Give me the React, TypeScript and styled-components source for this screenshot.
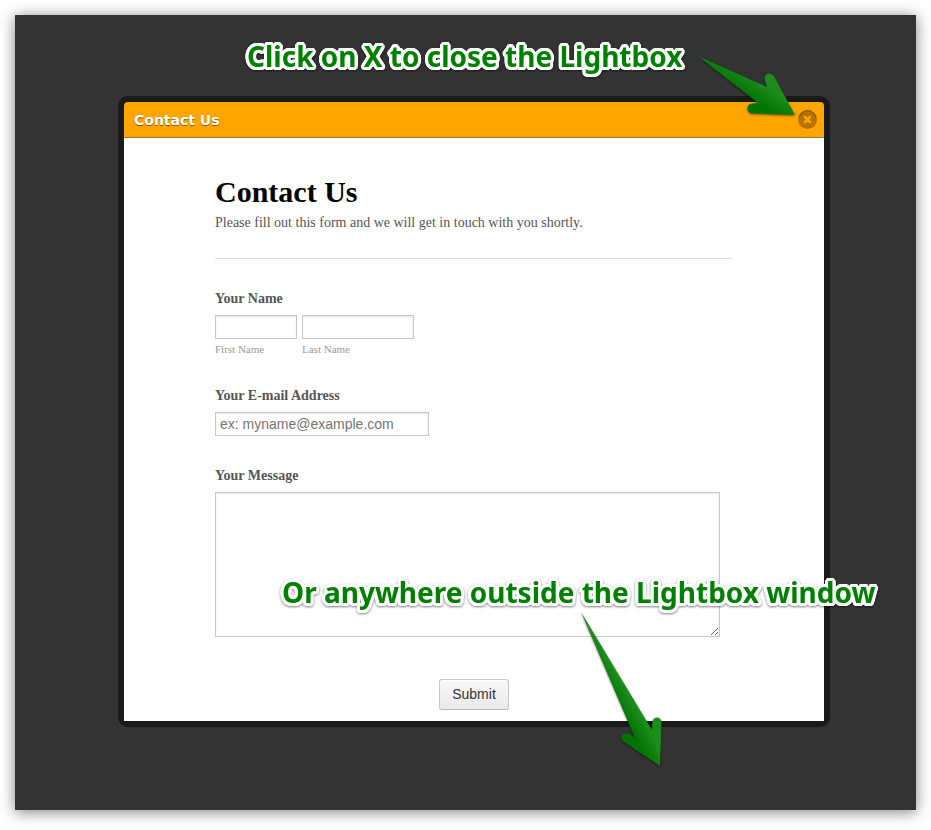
import React from "react";
import styled, { createGlobalStyle } from "styled-components";

const GlobalStyle = createGlobalStyle`
  *, *::before, *::after { box-sizing: border-box; }
  body {
    margin: 0;
    background: #fff;
    font-family: "Liberation Serif", "Times New Roman", serif;
  }
`;

const Page = styled.div`
  display: flex;
  min-height: 100vh;
  padding: 15px 15px 20px;
`;

const Backdrop = styled.main`
  flex: 1;
  min-width: 0;
  padding: 81px 0 83px 17px;
  background: #333;
  box-shadow: 0 2px 14px rgba(0, 0, 0, 0.5);
`;

const Dialog = styled.section`
  position: relative;
  width: 100%;
  max-width: 712px;
  margin: 0 auto;
  border: 6px solid #1a1a1a;
  border-radius: 10px;
  background: #1a1a1a;
`;

const TitleBar = styled.header`
  display: flex;
  align-items: center;
  justify-content: space-between;
  height: 36px;
  padding: 0 7px 0 10px;
  border-bottom: 1px solid #997a45;
  border-radius: 4px 4px 0 0;
  background: #ffa500;
`;

const BarTitle = styled.h2`
  margin: 0;
  color: #fff;
  font: bold 14px/20px Verdana, "DejaVu Sans", sans-serif;
  text-shadow: 0 1px 1px rgba(0, 0, 0, 0.5);
`;

const CloseButton = styled.button`
  display: flex;
  width: 19px;
  height: 19px;
  padding: 0;
  border: 0;
  background: none;
  cursor: pointer;
`;

const Body = styled.div`
  padding: 36px 20px 11px;
  background: #fff;
`;

const Form = styled.form`
  max-width: 518px;
  margin: 0 auto;
`;

const Heading = styled.h1`
  margin: 0;
  color: #000;
  font-size: 30px;
  line-height: 36px;
`;

const Intro = styled.p`
  margin: 0;
  color: #555;
  font-size: 14px;
  line-height: 26px;
`;

const FormHeader = styled.div`
  padding-bottom: 22px;
  margin-bottom: 30px;
  border-bottom: 1px solid #e0e0e0;
`;

const Field = styled.fieldset<{ $gap: number }>`
  min-width: 0;
  margin: 0 0 ${(p) => p.$gap}px;
  padding: 0;
  border: 0;
`;

const Caption = styled.label`
  display: block;
  margin-bottom: 7px;
  color: #555;
  font-size: 14px;
  font-weight: bold;
  line-height: 19px;
`;

const NameRow = styled.div`
  display: flex;
  gap: 5px;
`;

const NamePart = styled.label`
  display: flex;
  flex-direction: column;
  gap: 4px;
  color: #999;
  font-size: 11px;
  line-height: 13px;
`;

const TextInput = styled.input<{ $width: number }>`
  display: block;
  width: ${(p) => p.$width}px;
  max-width: 100%;
  height: 24px;
  padding: 0 4px;
  border: 1px solid #c8c8c8;
  border-radius: 0;
  background: #fff;
  box-shadow: inset 0 1px 2px rgba(0, 0, 0, 0.1);
  font: 14px "Liberation Sans", Arial, sans-serif;
  &::placeholder { color: #757575; opacity: 1; }
`;

const MessageBox = styled.textarea`
  display: block;
  width: 100%;
  max-width: 505px;
  height: 145px;
  padding: 4px;
  border: 1px solid #c8c8c8;
  border-radius: 0;
  background: #fff;
  box-shadow: inset 0 1px 2px rgba(0, 0, 0, 0.1);
  font: 14px "Liberation Sans", Arial, sans-serif;
`;

const Actions = styled.div`
  display: flex;
  justify-content: center;
`;

const SubmitButton = styled.button`
  height: 31px;
  padding: 0 12px 2px;
  border: 1px solid #c8c8c8;
  border-bottom-color: #b8b8b8;
  border-radius: 3px;
  background: linear-gradient(#f8f8f8, #eaeaea);
  box-shadow: inset 0 1px 0 #fff;
  color: #333;
  font: 14px "Liberation Sans", Arial, sans-serif;
  cursor: pointer;
`;

/* A smooth white outline: shadows spread evenly around a 3px circle. */
const outline = Array.from({ length: 24 }, (_, i) => {
  const angle = (i * Math.PI) / 12;
  return `${(3 * Math.cos(angle)).toFixed(2)}px ${(3 * Math.sin(angle)).toFixed(2)}px 0 #fff`;
}).join(", ");

const Note = styled.p<{ $top: number; $left: number }>`
  position: absolute;
  top: ${(p) => p.$top}px;
  left: ${(p) => p.$left}px;
  margin: 0;
  color: #008000;
  font: bold 28px/30px Tahoma, "Noto Sans", sans-serif;
  white-space: nowrap;
  text-shadow: ${outline};
  filter: drop-shadow(0 1px 1px rgba(0, 0, 0, 0.5));
  pointer-events: none;
`;

const Arrow = styled.svg<{ $top: number; $left: number }>`
  position: absolute;
  top: ${(p) => p.$top}px;
  left: ${(p) => p.$left}px;
  overflow: visible;
  filter: drop-shadow(0 1px 1px rgba(0, 0, 0, 0.5));
  pointer-events: none;
`;

export default function App() {
  return (
    <>
      <GlobalStyle />
      <Page>
        <Backdrop>
          <Dialog role="dialog" aria-labelledby="dialog-title">
            <TitleBar>
              <BarTitle id="dialog-title">Contact Us</BarTitle>
              <CloseButton type="button" aria-label="Close">
                <svg width="19" height="19" viewBox="0 0 19 19" aria-hidden="true">
                  <circle cx="9.5" cy="9.5" r="9.5" fill="#b37300" />
                  <path d="M1 8a8.6 8.6 0 0 1 17 0" fill="none" stroke="#805300" />
                  <path d="M7.2 7.2l4.600 4.600M11.800 7.200l-4.600 4.600" stroke="#ffa500" strokeWidth="2.6" strokeLinecap="square" />
                </svg>
              </CloseButton>
            </TitleBar>
            <Body>
              <Form onSubmit={(e) => e.preventDefault()}>
                <FormHeader>
                  <Heading>Contact Us</Heading>
                  <Intro>Please fill out this form and we will get in touch with you shortly.</Intro>
                </FormHeader>
                <Field $gap={30} aria-labelledby="name-caption">
                  <Caption as="div" id="name-caption">Your Name</Caption>
                  <NameRow>
                    <NamePart>
                      <TextInput $width={82} name="first" />
                      First Name
                    </NamePart>
                    <NamePart>
                      <TextInput $width={112} name="last" />
                      Last Name
                    </NamePart>
                  </NameRow>
                </Field>
                <Field $gap={30}>
                  <Caption htmlFor="email">Your E-mail Address</Caption>
                  <TextInput id="email" type="email" $width={214} placeholder="ex: myname@example.com" />
                </Field>
                <Field $gap={42}>
                  <Caption htmlFor="message">Your Message</Caption>
                  <MessageBox id="message" />
                </Field>
                <Actions>
                  <SubmitButton type="submit">Submit</SubmitButton>
                </Actions>
              </Form>
            </Body>
            <Note $top={-61} $left={123}>Click on X to close the Lightbox</Note>
            <Note $top={475} $left={158}>Or anywhere outside the Lightbox window</Note>
            <Arrow $top={-46} $left={574} width="98" height="60" viewBox="0 0 98 60" aria-hidden="true">
              <defs>
                <linearGradient id="green-a" gradientUnits="userSpaceOnUse" x1="72" y1="33" x2="62" y2="49">
                  <stop offset="0" stopColor="#1c8c1c" />
                  <stop offset="1" stopColor="#007300" />
                </linearGradient>
              </defs>
              <path d="M0 0L69 31L67 25C64.500 18 73 15 76.500 21L97 59L54 57.500C48 57 48 48 54 47.500L60 47Z" fill="url(#green-a)" />
            </Arrow>
            <Arrow $top={510} $left={457} width="80" height="154" viewBox="0 0 80 154" aria-hidden="true">
              <defs>
                <linearGradient id="green-b" gradientUnits="userSpaceOnUse" x1="62" y1="108" x2="48" y2="116">
                  <stop offset="0" stopColor="#1c8c1c" />
                  <stop offset="1" stopColor="#007300" />
                </linearGradient>
              </defs>
              <path d="M0 0L71 118L71.500 110C72 104 80 104 80.500 110L79 154L43 130C37 125 42 119 49 122L54 126Z" fill="url(#green-b)" />
            </Arrow>
          </Dialog>
        </Backdrop>
      </Page>
    </>
  );
}
